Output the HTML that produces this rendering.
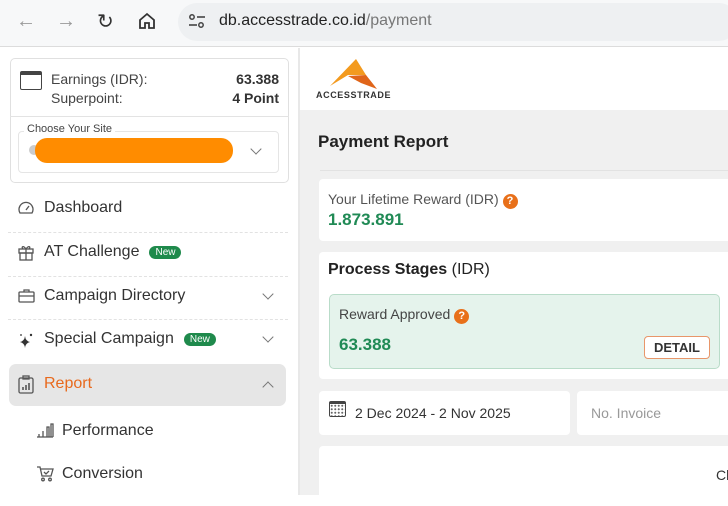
<!DOCTYPE html>
<html><head><style>
*{margin:0;padding:0;box-sizing:border-box}
body{width:728px;height:495px;overflow:hidden;font-family:"Liberation Sans",sans-serif;background:#fff;position:relative;color:#222}
.a{position:absolute}
.nav{font-size:16px;color:#333;display:flex;align-items:center}
.new{background:#1f8a4c;color:#fff;font-size:10px;border-radius:8px;padding:1px 6px;margin-left:10px}
.dv{height:0;border-top:1px dashed #e2e2e2}
.chev{width:8px;height:8px;border-right:1.5px solid #777;border-bottom:1.5px solid #777;transform:rotate(45deg)}
svg.i{position:absolute;fill:none;stroke:#555;stroke-width:1.3}
</style></head><body>
<div class="a" style="left:0;top:0;width:728px;height:47px;background:#f7f8f9;border-bottom:1px solid #dcdcdc"></div>
<div class="a" style="left:16px;top:10px;font-size:20px;color:#999">&#8592;</div>
<div class="a" style="left:56px;top:10px;font-size:20px;color:#999">&#8594;</div>
<div class="a" style="left:97px;top:9px;font-size:20px;color:#333">&#8635;</div>
<svg class="a" style="left:138px;top:12px" width="18" height="18" viewBox="0 0 18 18"><path d="M2 8L9 2L16 8V16H11V11H7V16H2Z" fill="none" stroke="#333" stroke-width="1.8"/></svg>
<div class="a" style="left:178px;top:3px;width:560px;height:38px;border-radius:19px;background:#eef0f2"></div>
<svg class="a" style="left:188px;top:13px" width="18" height="16"><circle cx="4" cy="4" r="2.2" fill="none" stroke="#444" stroke-width="1.5"/><line x1="9" y1="4" x2="17" y2="4" stroke="#444" stroke-width="1.6"/><line x1="1" y1="12" x2="9" y2="12" stroke="#444" stroke-width="1.6"/><circle cx="13" cy="12" r="2.2" fill="none" stroke="#444" stroke-width="1.5"/></svg>
<div class="a" style="left:219px;top:12px;font-size:16px;color:#222">db.accesstrade.co.id<span style="color:#777">/payment</span></div>
<!-- sidebar -->
<div class="a" style="left:298px;top:48px;width:2px;height:447px;background:#e8e8e8"></div>
<div class="a" style="left:10px;top:58px;width:279px;height:125px;border:1px solid #e0e0e0;border-radius:5px"></div>
<div class="a" style="left:20px;top:71px;width:22px;height:19px;border:1.5px solid #444;border-radius:2px;border-top-width:4px"></div>
<div class="a" style="left:51px;top:70px;font-size:14px;color:#444;line-height:19px">Earnings (IDR):<br>Superpoint:</div>
<div class="a" style="left:180px;top:70px;width:99px;text-align:right;font-size:14px;font-weight:bold;color:#333;line-height:19px">63.388<br>4 Point</div>
<div class="a" style="left:10px;top:116px;width:279px;border-top:1px solid #e3e3e3"></div>
<div class="a" style="left:18px;top:131px;width:261px;height:42px;border:1px solid #e5e5e5;border-radius:4px"></div>
<div class="a" style="left:24px;top:123px;font-size:11px;color:#444;background:#fff;padding:0 3px">Choose Your Site</div>
<div class="a" style="left:29px;top:145px;width:10px;height:10px;border-radius:5px;background:#ccc"></div>
<div class="a" style="left:35px;top:138px;width:198px;height:25px;border-radius:12px;background:#ff8c00"></div>
<div class="chev a" style="left:252px;top:145px"></div>
<svg class="i" style="left:18px;top:201px" width="16" height="14" viewBox="0 0 16 14"><path d="M2 12A7 7 0 1 1 14 12Z"/><path d="M8 9L11 5"/></svg>
<div class="a nav" style="left:44px;top:199px">Dashboard</div>
<div class="a dv" style="left:8px;top:232px;width:280px"></div>
<svg class="i" style="left:18px;top:244px" width="16" height="17" viewBox="0 0 16 17"><rect x="1" y="5" width="14" height="4"/><rect x="2" y="9" width="12" height="7"/><path d="M8 5V16M8 5C5 1 3 3 5 5M8 5C11 1 13 3 11 5"/></svg>
<div class="a nav" style="left:44px;top:243px">AT Challenge<span class="new">New</span></div>
<div class="a dv" style="left:8px;top:276px;width:280px"></div>
<svg class="i" style="left:18px;top:289px" width="17" height="14" viewBox="0 0 17 14"><rect x="1" y="3" width="15" height="10" rx="1"/><path d="M6 3V1H11V3M1 7H16"/></svg>
<div class="a nav" style="left:44px;top:287px">Campaign Directory</div>
<div class="chev a" style="left:264px;top:290px"></div>
<div class="a dv" style="left:8px;top:319px;width:280px"></div>
<svg class="a" style="left:18px;top:332px" width="16" height="16" viewBox="0 0 16 16"><path d="M7 4Q7.5 9 12 10Q7.5 11 7 16Q6.5 11 2 10Q6.5 9 7 4Z" fill="#333"/><circle cx="13" cy="3" r="1.2" fill="#333"/><circle cx="3" cy="3" r="0.9" fill="#333"/></svg>
<div class="a nav" style="left:44px;top:330px">Special Campaign<span class="new">New</span></div>
<div class="chev a" style="left:264px;top:333px"></div>
<div class="a" style="left:9px;top:364px;width:277px;height:42px;border-radius:7px;background:#e6e6e6"></div>
<svg class="i" style="left:18px;top:375px" width="16" height="19" viewBox="0 0 16 19"><rect x="1" y="3" width="14" height="15" rx="1.5"/><rect x="5" y="1" width="6" height="3"/><path d="M5 15V12M8 15V10M11 15V8" stroke-width="1.6"/></svg>
<div class="a nav" style="left:44px;top:375px;color:#e86a1e">Report</div>
<div class="chev a" style="left:264px;top:383px;transform:rotate(-135deg)"></div>
<svg class="i" style="left:36px;top:422px" width="18" height="16" viewBox="0 0 18 16"><path d="M1 15H17M3 15V12M7 15V9M11 15V5H13V15M15 15V2H17V15"/></svg>
<div class="a nav" style="left:62px;top:422px">Performance</div>
<svg class="i" style="left:36px;top:465px" width="18" height="17" viewBox="0 0 18 17"><path d="M1 2H4L6 11H15L17 4H5"/><path d="M8 7L10 9L13 6"/><circle cx="7" cy="14.5" r="1.3"/><circle cx="14" cy="14.5" r="1.3"/></svg>
<div class="a nav" style="left:62px;top:465px">Conversion</div>
<!-- main -->
<div class="a" style="left:300px;top:110px;width:428px;height:385px;background:#f0f0f0"></div>
<svg class="a" style="left:328px;top:58px" width="52" height="32" viewBox="0 0 52 32"><path d="M2 28L28 1L38 17L20 17Z" fill="#f39a1e"/><path d="M20 18L38 17L49 31L33 25Z" fill="#e0651a"/></svg>
<div class="a" style="left:316px;top:90px;font-size:9px;font-weight:bold;color:#333;letter-spacing:0.6px">ACCESSTRADE</div>
<div class="a" style="left:318px;top:132px;font-size:17px;font-weight:bold;color:#222">Payment Report</div>
<div class="a" style="left:320px;top:170px;width:408px;border-top:1px solid #e2e2e2"></div>
<div class="a" style="left:319px;top:179px;width:420px;height:62px;background:#fff;border-radius:4px"></div>
<div class="a" style="left:328px;top:191px;font-size:14px;color:#555">Your Lifetime Reward (IDR) <span style="display:inline-block;width:15px;height:15px;border-radius:8px;background:#e8701a;color:#fff;font-size:11px;text-align:center;line-height:15px;font-weight:bold">?</span></div>
<div class="a" style="left:328px;top:210px;font-size:17px;font-weight:bold;color:#208a55">1.873.891</div>
<div class="a" style="left:319px;top:252px;width:420px;height:127px;background:#fff;border-radius:4px"></div>
<div class="a" style="left:328px;top:261px;font-size:16px;font-weight:bold;color:#222">Process Stages <span style="font-weight:normal">(IDR)</span></div>
<div class="a" style="left:329px;top:294px;width:391px;height:75px;background:#e5f3ec;border:1px solid #b9dcc9;border-radius:5px"></div>
<div class="a" style="left:339px;top:306px;font-size:14px;color:#444">Reward Approved <span style="display:inline-block;width:15px;height:15px;border-radius:8px;background:#e8701a;color:#fff;font-size:11px;text-align:center;line-height:15px;font-weight:bold">?</span></div>
<div class="a" style="left:339px;top:335px;font-size:17px;font-weight:bold;color:#208a55">63.388</div>
<div class="a" style="left:644px;top:336px;width:66px;height:23px;border:1px solid #e8966a;border-radius:4px;background:#fff;font-size:13px;font-weight:bold;text-align:center;line-height:21px;color:#333">DETAIL</div>
<div class="a" style="left:319px;top:391px;width:251px;height:44px;background:#fff;border-radius:4px"></div>
<div class="a" style="left:329px;top:401px;width:17px;height:16px;border:1.5px solid #444;border-top-width:3px;border-radius:2px;background:radial-gradient(circle,#666 0.8px,transparent 1.2px) 0 0/3.5px 3.5px"></div>
<div class="a" style="left:355px;top:405px;font-size:14px;color:#333">2 Dec 2024 - 2 Nov 2025</div>
<div class="a" style="left:577px;top:391px;width:160px;height:44px;background:#fff;border-radius:4px"></div>
<div class="a" style="left:591px;top:405px;font-size:14px;color:#999">No. Invoice</div>
<div class="a" style="left:319px;top:446px;width:420px;height:60px;background:#fff;border-radius:4px"></div>
<div class="a" style="left:716px;top:467px;font-size:14px;color:#333">Cl</div>
</body></html>
